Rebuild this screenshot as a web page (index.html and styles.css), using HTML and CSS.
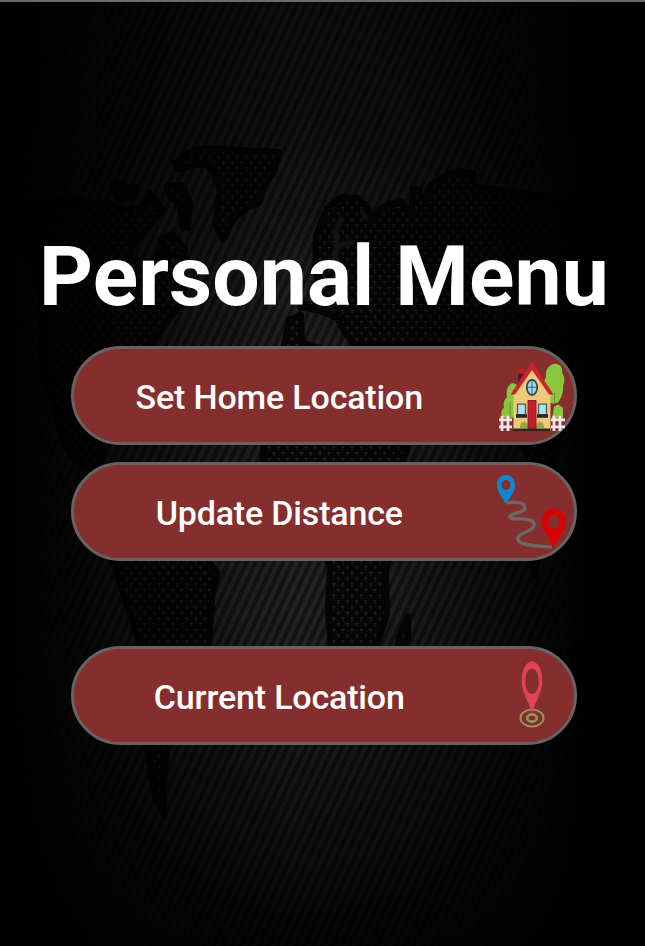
FILE: index.html
```html
<!DOCTYPE html>
<html lang="en">
<head>
<meta charset="utf-8">
<title>Personal Menu</title>
<link rel="stylesheet" href="styles.css">
</head>
<body>
<main class="screen">
  <svg class="backdrop" viewBox="0 0 645 946" aria-hidden="true">
    <defs>
      <pattern id="stripes" width="9.1" height="20" patternUnits="userSpaceOnUse" patternTransform="skewX(-25)">
        <rect width="9.1" height="20" fill="#131313"/>
        <rect x="1" width="5.4" height="20" fill="#1d1d1d"/>
        <rect x="2.2" width="3" height="20" fill="#252525"/>
      </pattern>
      <pattern id="mesh" width="9.2" height="11.4" patternUnits="userSpaceOnUse">
        <rect width="9.2" height="11.4" fill="#060606"/>
        <path d="M1 2.5h3M5.6 8.2h3" stroke="#2e2e2e" stroke-width="1.4"/>
        <path d="M2.5 3v3M7.1 8.7v2.7" stroke="#1a1a1a" stroke-width="1.4"/>
      </pattern>
      <linearGradient id="sides">
        <stop offset="0" stop-color="#000"/>
        <stop offset=".1" stop-color="#000" stop-opacity=".85"/>
        <stop offset=".28" stop-color="#000" stop-opacity=".42"/>
        <stop offset=".46" stop-color="#000" stop-opacity="0"/>
        <stop offset=".62" stop-color="#000" stop-opacity=".2"/>
        <stop offset=".8" stop-color="#000" stop-opacity=".7"/>
        <stop offset=".92" stop-color="#000"/>
      </linearGradient>
      <linearGradient id="ends" x2="0" y2="1">
        <stop offset="0" stop-color="#000" stop-opacity=".6"/>
        <stop offset=".14" stop-color="#000" stop-opacity=".5"/>
        <stop offset=".32" stop-color="#000" stop-opacity=".12"/>
        <stop offset=".65" stop-color="#000" stop-opacity="0"/>
        <stop offset=".85" stop-color="#000" stop-opacity=".45"/>
        <stop offset="1" stop-color="#000" stop-opacity=".85"/>
      </linearGradient>
    </defs>
    <rect width="645" height="946" fill="url(#stripes)"/>
    <g class="land">
      <path d="M175 163 188 153 205 148 279 152 274 173 263 187 260 202 247 208 234 219 223 240 216 225 217 205 220 190 213 173 205 163 188 167 179 169Z"/>
      <path d="M111 187 116 181 127 188 137 187 135 197 119 199ZM167 186 182 185 190 202 188 228 182 226 180 205 170 196Z"/>
      <path d="M160 240 172 234 185 248 184 260 166 252Z"/>
      <path d="M20 204 52 198 68 203 80 200 97 203 109 202 122 209 141 209 150 193 162 210 150 226 135 242 128 258 152 263 160 252 174 270 188 280 178 309 164 325 150 347 130 369 113 390 105 405 92 410 84 425 88 438 102 446 102 460 88 468 72 457 62 440 55 409 45 380 40 350 42 310 36 270 18 240Z"/>
      <path d="M104 470 134 478 160 505 194 540 217 573 212 600 209 646 192 680 176 716 167 748 164 784 164 815 155 797 147 748 141 700 140 645 128 608 113 562 103 530Z"/>
      <path d="M289 320 301 315 302 342 330 352 420 346 433 390 415 420 403 463 405 510 393 540 386 570 387 615 376 647 356 698 346 698 332 665 328 610 330 565 306 525 277 505 263 475 263 425 277 386 283 350Z"/>
      <path d="M300 307 314 303 320 285 315 270 316 235 327 208 342 197 358 198 368 208 369 222 382 207 400 201 412 212 412 189 419 190 423 198 431 184 447 175 457 171 473 173 475 187 502 190 540 195 580 202 650 214 650 345 575 358 566 410 555 455 540 490 528 456 500 402 475 365 449 345 354 345 345 333 337 318 320 311Z"/>
      <path d="M399 636 408 616 408 640 400 673 394 673ZM530 564 538 560 535 575ZM575 650 600 624 635 635 645 670 645 715 610 724 578 708 569 680Z"/>
    </g>
    <path class="water" d="M341 219 336 232 337 248 333 260M351 243 341 245M362 213 366 218"/>
    <rect width="645" height="946" fill="url(#sides)"/>
    <rect width="645" height="946" fill="url(#ends)"/>
  </svg>

  <h1 class="title">Personal Menu</h1>

  <nav class="menu">
    <button class="item" type="button">
      <span class="label">Set Home Location</span>
      <svg class="icon icon-home" viewBox="0 0 66 69" preserveAspectRatio="none">
        <g fill="#8bc63f">
          <path d="M55 2c5-1 9 3 8 8 3 5 3 10 1 13 1 7-2 13-5 17l-5 1c-6-1-9-7-8-12-2-5-2-10 1-14-1-6 2-12 8-13Z"/>
          <path d="M13 21c4 0 6 2 7 6v28H4c-3-3-2-8 1-10-1-4 0-8 3-10-1-6 0-12 5-14ZM55 44l4-2 5 3v11H53Z"/>
        </g>
        <path d="M55.500 30v11M11 40v16" stroke="#6f8a35"/>
        <path d="M19 9h5v9l-5 5Z" fill="#422025"/><path d="M18 7h7v4.500h-7Z" fill="#c41e2b"/>
        <path d="M33 5 51.500 31v36h-37V31Z" fill="#edcb7b"/>
        <path d="M33 0 54.500 32H50L33 8 16 32h-4.500Z" fill="#cf202d"/>
        <ellipse cx="33" cy="25" rx="5.200" ry="7.500" fill="#a2d8eb" stroke="#344650" stroke-width="1.800"/>
        <path d="M33 17.500v15M28 25h10" stroke="#425e6b"/>
        <path d="M18.500 41.500h8V52h-8ZM39.500 41.500h8V52h-8Z" fill="#a9e0f3" stroke="#4e5b5d" stroke-width="1.300"/>
        <path d="M17 51.500h11V55H17ZM38 51.500h11V55H38Z" fill="#292421"/>
        <path d="M21 65c0-4 2-6 4-6s4 2 4 6ZM37 65c0-4 2-6 4-6s4 2 4 6Z" fill="#93a944"/>
        <path d="M29 38h8v28h-8Z" fill="#c61d2d" stroke="#8c222c"/>
        <path d="M15 65.500h36V68H13Z" fill="#32251c"/>
        <path d="M3 53v15M9 53v15M0 57h13M0 64h13M55 53v15M61 53v15M52 57h14M52 64h14" fill="none" stroke="#f2e8e9" stroke-width="2.800"/>
      </svg>
    </button>
    <button class="item" type="button">
      <span class="label">Update Distance</span>
      <svg class="icon icon-route" viewBox="0 0 70 76">
        <path d="M10 29C20 27 28 29 28 34S12 39 13 43s23-1 24 7S20 58 21 65s20 7 34 8" fill="none" stroke="#6d6766" stroke-width="3.400"/>
        <path fill="#0e87d1" fill-rule="evenodd" d="M9 1c5.300 0 9 4.300 9 10 0 7-5 12-9 19C5 23 0 18 0 11 0 5.300 3.700 1 9 1Zm0 5a4.500 5 0 1 0 .1 0Z"/>
        <path fill="#d90000" fill-rule="evenodd" d="M56.500 34.500c7 0 11.500 6 11.500 13 0 9-7 15-11.500 26.500-4.500-11.500-11.500-17.500-11.500-26.500 0-7 4.500-13 11.500-13Zm0 6.500a5.800 7 0 1 0 .1 0Z"/>
      </svg>
    </button>
    <button class="item item-current" type="button">
      <span class="label">Current Location</span>
      <svg class="icon" viewBox="0 0 66 70">
        <g fill="none" stroke="#94965a" stroke-width="1.900">
          <ellipse cx="33" cy="57" rx="11.500" ry="8.500"/>
          <ellipse cx="33" cy="57" rx="4.800" ry="3.600" stroke-width="2.600"/>
        </g>
        <path fill="#e24256" fill-rule="evenodd" d="M33 .5c6 0 10.300 8 10.300 19.500C43.300 32 36 40 33 53 30 40 22.700 32 22.700 20 22.700 8.500 27 .5 33 .5Zm0 7c-4 0-6.700 5.500-6.700 13S29 33 33 33s6.700-5 6.700-12.500S37 7.500 33 7.500Z"/>
      </svg>
    </button>
  </nav>
</main>
</body>
</html>
```
FILE: styles.css
```css
body {
  margin: 0;
  background: #000;
  font-family: Roboto, "Liberation Sans", sans-serif;
  color: #fff;
}

.screen {
  position: relative;
  isolation: isolate;
  box-sizing: border-box;
  height: 946px;
  overflow: hidden;
  border-top: 2px solid #6b6b6b;
  padding-top: 226px;
}

.backdrop {
  position: absolute;
  z-index: -1;
  top: -2px;
  left: 0;
  width: 645px;
  height: 946px;
  clip-path: inset(2px 0 0);
}

.land {
  fill: url(#mesh);
  stroke: #050505;
  stroke-width: 6;
  stroke-linejoin: round;
  filter: blur(0.7px);
}

.water {
  fill: none;
  stroke: #1d1d1d;
  stroke-width: 5;
  stroke-linecap: round;
  filter: blur(0.8px);
}

.title {
  margin: 0 0 0 39px;
  font-size: 84px;
  font-weight: 700;
  line-height: 98px;
  letter-spacing: 0.1px;
  white-space: nowrap;
}

.menu {
  display: flex;
  flex-direction: column;
  gap: 17px;
  width: 506px;
  margin: 20px 0 0 71px;
}

.item {
  display: flex;
  align-items: center;
  box-sizing: border-box;
  height: 99px;
  padding: 0 9.5px 0 0;
  border: 3px solid #686363;
  border-radius: 50px;
  background: #842e2e;
  color: inherit;
  font: 500 34px/40px Roboto, "Liberation Sans", sans-serif;
  letter-spacing: -0.17px;
}

.item-current {
  margin-top: 68px;
}

.label {
  flex: 1;
  padding: 3px 14px 0 0;
  text-align: center;
  white-space: nowrap;
}

.icon {
  flex: none;
  width: 66px;
  height: 70px;
}

.icon-home {
  margin-top: 2px;
}

.icon-route {
  width: 70px;
  height: 76px;
  margin: 1px -2px 0;
}
```
